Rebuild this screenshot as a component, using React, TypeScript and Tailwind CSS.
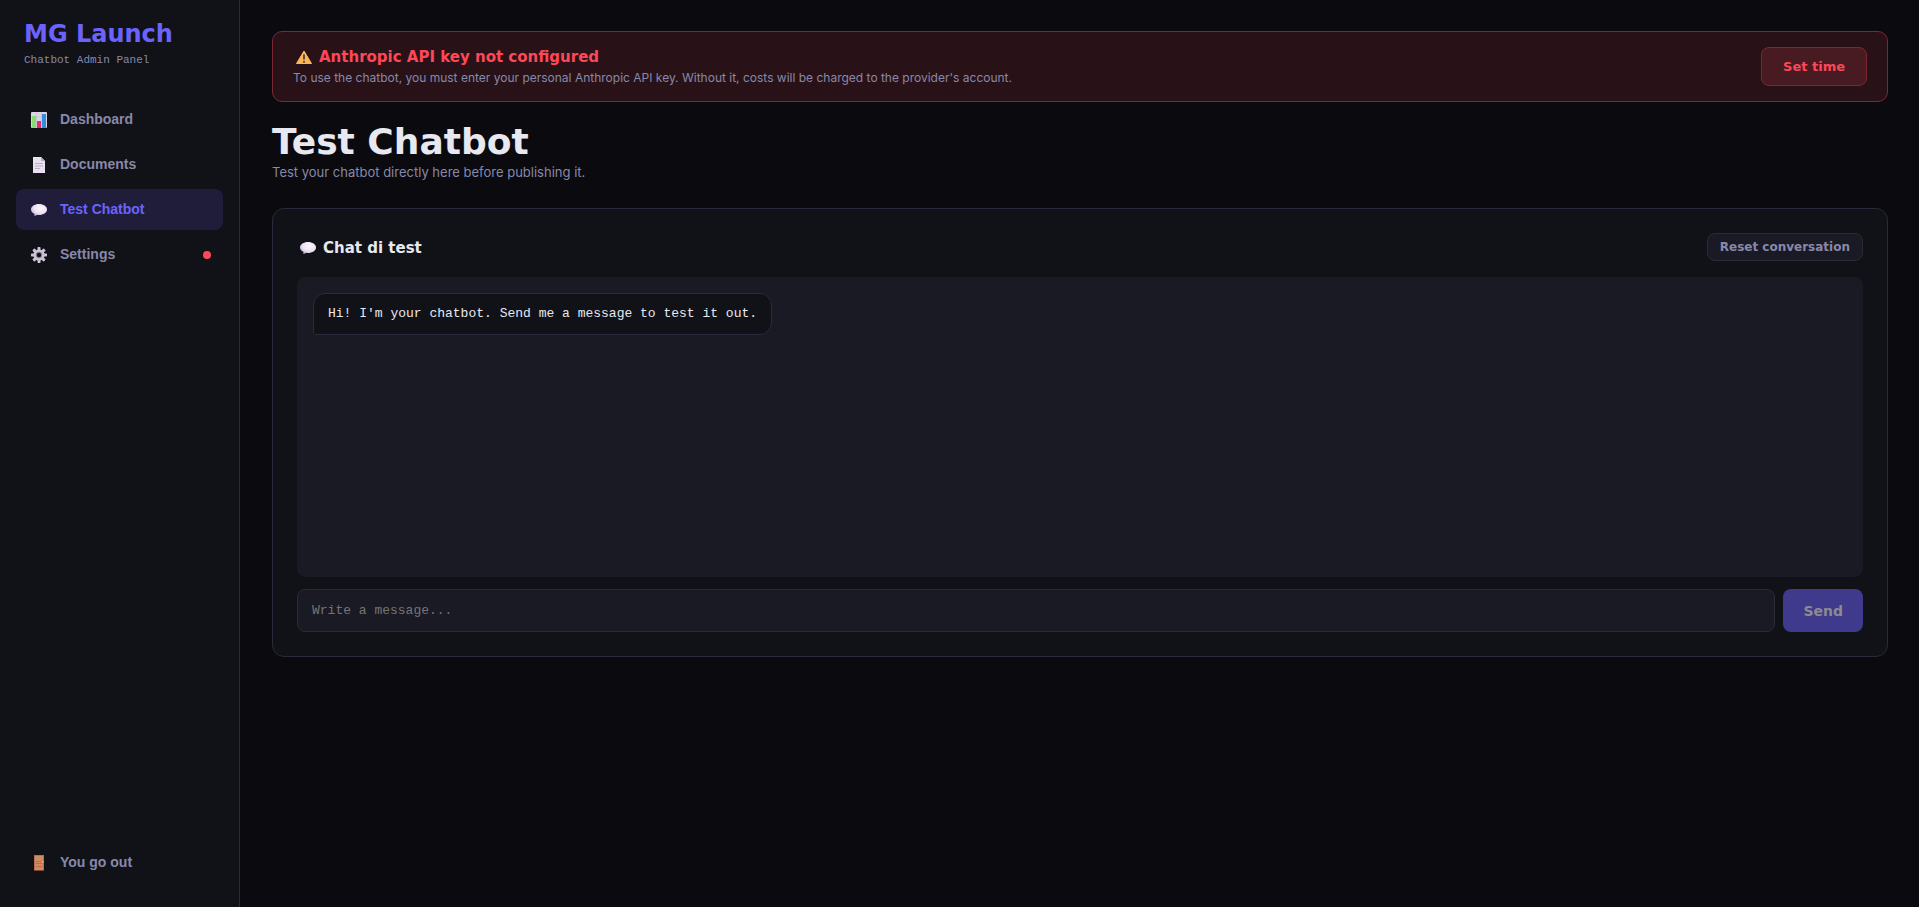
import type { ReactNode } from "react";

const display = "font-['DejaVu_Sans',sans-serif]";
const body = "font-[Inter,sans-serif]";
const mono = "font-['Liberation_Mono',monospace]";

function ChartIcon() {
    return (
        <svg width="16" height="16" viewBox="0 0 16 16" aria-hidden="true">
            <rect width="16" height="16" rx="1" fill="#dcd5e4" />
            <path d="M0 5h16M0 10h16M5.5 0v16M10.5 0v16" stroke="#c3bccd" strokeWidth=".6" />
            <rect x="1" y="4" width="4" height="12" fill="#86dd72" />
            <rect x="6" y="9" width="4" height="7" fill="#e02d6f" />
            <rect x="11" y="2" width="4" height="14" fill="#318fdc" />
        </svg>
    );
}

function PageIcon() {
    return (
        <svg width="16" height="16" viewBox="0 0 16 16" aria-hidden="true">
            <path d="M2 0h8l4 4v12H2z" fill="#e9e0f2" />
            <path d="M10 0v4h4z" fill="#b5acc0" />
            <path d="M4 6.5h8M4 9h8M4 11.5h5" stroke="#b9b0c4" />
        </svg>
    );
}

function BubbleIcon() {
    return (
        <svg width="16" height="16" viewBox="0 0 16 16" aria-hidden="true">
            <defs>
                <radialGradient id="bubble" cx=".6" cy=".35" r=".7">
                    <stop offset="0" stopColor="#fbf8fd" />
                    <stop offset=".6" stopColor="#ece2f3" />
                    <stop offset="1" stopColor="#bfaed2" />
                </radialGradient>
            </defs>
            <path
                d="M8 2c4.500 0 8 2.400 8 5.500S12.500 13 8 13c-.7 0-1.400 0-2-.2-.7.700-1.500 1.200-2.800 1.200.4-.7.400-1.400.1-2.200C1.300 10.800 0 9.300 0 7.500 0 4.400 3.500 2 8 2z"
                fill="url(#bubble)"
            />
        </svg>
    );
}

function GearIcon() {
    return (
        <svg width="16" height="16" viewBox="0 0 16 16" aria-hidden="true">
            <g fill="#cdc4d8">
                <rect x="6.500" width="3" height="16" rx=".7" />
                <rect x="6.500" width="3" height="16" rx=".7" transform="rotate(45 8 8)" />
                <rect x="6.500" width="3" height="16" rx=".7" transform="rotate(90 8 8)" />
                <rect x="6.500" width="3" height="16" rx=".7" transform="rotate(135 8 8)" />
                <circle cx="8" cy="8" r="5.600" />
            </g>
            <circle cx="8" cy="8" r="3.200" fill="#8f869c" />
            <circle cx="8" cy="8" r="2.200" fill="#111217" />
        </svg>
    );
}

function DoorIcon() {
    return (
        <svg width="16" height="16" viewBox="0 0 16 16" aria-hidden="true">
            <rect x="3" width="10" height="16" fill="#b96f4e" />
            <rect x="4" y="1" width="8" height="14" fill="#d08b63" />
            <path d="M4.500 6.500h7M4.500 8.500h7M4.500 11.500h7" stroke="#b56a45" strokeWidth=".8" />
            <rect x="11" y="6" width="1.500" height="1.500" fill="#f6b64a" />
            <path d="M3 15.500h10" stroke="#7d4438" />
        </svg>
    );
}

function WarningIcon() {
    return (
        <svg width="16" height="16" viewBox="0 0 16 16" aria-hidden="true">
            <path d="M8 2 15.500 14.500H.5z" fill="#fdb655" stroke="#fdb655" strokeLinejoin="round" />
            <path d="M8 5.500v5" stroke="#5b4a4a" strokeWidth="2" />
            <circle cx="8" cy="12.800" r="1.100" fill="#5b4a4a" />
        </svg>
    );
}

type NavItemProps = {
    icon: ReactNode;
    label: string;
    active?: boolean;
    alert?: boolean;
};

function NavItem({ icon, label, active, alert }: NavItemProps) {
    return (
        <button
            type="button"
            className={`flex w-full items-center gap-[10px] rounded-lg px-3 py-[10px] text-left text-sm leading-[21px] font-bold ${
                active ? "bg-[#1f1d39] text-[#6c63ff]" : "text-[#8888aa]"
            }`}
        >
            <span className="flex w-[22px] justify-center">{icon}</span>
            <span className="flex-1">{label}</span>
            {alert && <span className="size-2 rounded-full bg-[#ff4757]" />}
        </button>
    );
}

export default function App() {
    return (
        <div className="flex min-h-screen bg-[#0a0a0f] text-[#e8e8f0]">
            <aside className="flex w-60 shrink-0 flex-col border-r border-[#2a2a3a] bg-[#111217] px-4 py-6 font-['Liberation_Sans',sans-serif]">
                <div className="mb-[31px] px-2">
                    <div className={`${display} text-2xl leading-5 font-bold text-[#6c63ff]`}>MG Launch</div>
                    <div className={`${mono} mt-2 text-[11px] leading-4 text-[#8888aa]`}>Chatbot Admin Panel</div>
                </div>

                <nav className="flex flex-1 flex-col gap-1">
                    <NavItem icon={<ChartIcon />} label="Dashboard" />
                    <NavItem icon={<PageIcon />} label="Documents" />
                    <NavItem icon={<BubbleIcon />} label="Test Chatbot" active />
                    <NavItem icon={<GearIcon />} label="Settings" alert />
                </nav>

                <NavItem icon={<DoorIcon />} label="You go out" />
            </aside>

            <main className={`${body} min-w-0 flex-1 pt-[31px] pr-[31px] pb-8 pl-8`}>
                <div className="mb-6 flex items-center justify-between gap-4 rounded-[10px] border border-[#7c2833] bg-[#281218] px-5 py-[15px]">
                    <div>
                        <div className={`${display} flex items-center gap-[7px] pl-[3px] text-[15px] leading-5 font-bold text-[#ff4757]`}>
                            <WarningIcon />
                            Anthropic API key not configured
                        </div>
                        <p className="mt-[3px] text-xs leading-4 text-[#8888aa]">
                            To use the chatbot, you must enter your personal Anthropic API key. Without it, costs will be charged to the provider's account.
                        </p>
                    </div>
                    <button
                        type="button"
                        className={`${display} shrink-0 rounded-lg border border-[#7c2833] bg-[#481a22] px-[21px] py-2 text-[13px] leading-[21px] font-bold text-[#ff4757]`}
                    >
                        Set time
                    </button>
                </div>

                <h1 className={`${display} text-4xl leading-8 font-bold`}>Test Chatbot</h1>
                <p className="mt-1 text-[13px] leading-5 text-[#8888aa]">Test your chatbot directly here before publishing it.</p>

                <section className="mt-[26px] rounded-xl border border-[#2a2a3a] bg-[#111217] p-6">
                    <div className="mb-4 flex items-center justify-between">
                        <h2 className={`${display} flex items-center gap-[7px] pt-[2px] pl-[3px] text-[15px] leading-6 font-bold`}>
                            <BubbleIcon />
                            Chat di test
                        </h2>
                        <button
                            type="button"
                            className={`${display} rounded-lg border border-[#2a2a3a] bg-[#1a1a24] px-3 py-1 text-xs leading-[18px] font-bold text-[#8888aa]`}
                        >
                            Reset conversation
                        </button>
                    </div>

                    <div className="flex h-[300px] flex-col items-start rounded-lg bg-[#1a1a24] p-4">
                        <div className={`${mono} rounded-xl rounded-bl-[3px] border border-[#2a2a3a] bg-[#111217] px-[14px] py-[10px] text-[13px] leading-5`}>
                            Hi! I'm your chatbot. Send me a message to test it out.
                        </div>
                    </div>

                    <form className="mt-3 flex gap-2" onSubmit={(e) => e.preventDefault()}>
                        <input
                            type="text"
                            aria-label="Message"
                            placeholder="Write a message..."
                            className={`${mono} min-w-0 flex-1 rounded-lg border border-[#2a2a3a] bg-[#1a1a24] px-[14px] py-[10px] text-[13px] leading-[21px] placeholder:text-[#757575]`}
                        />
                        <button
                            type="submit"
                            disabled
                            className={`${display} rounded-lg bg-[#3f3a8b] px-5 text-sm font-bold text-[#8b8b91]`}
                        >
                            Send
                        </button>
                    </form>
                </section>
            </main>
        </div>
    );
}
